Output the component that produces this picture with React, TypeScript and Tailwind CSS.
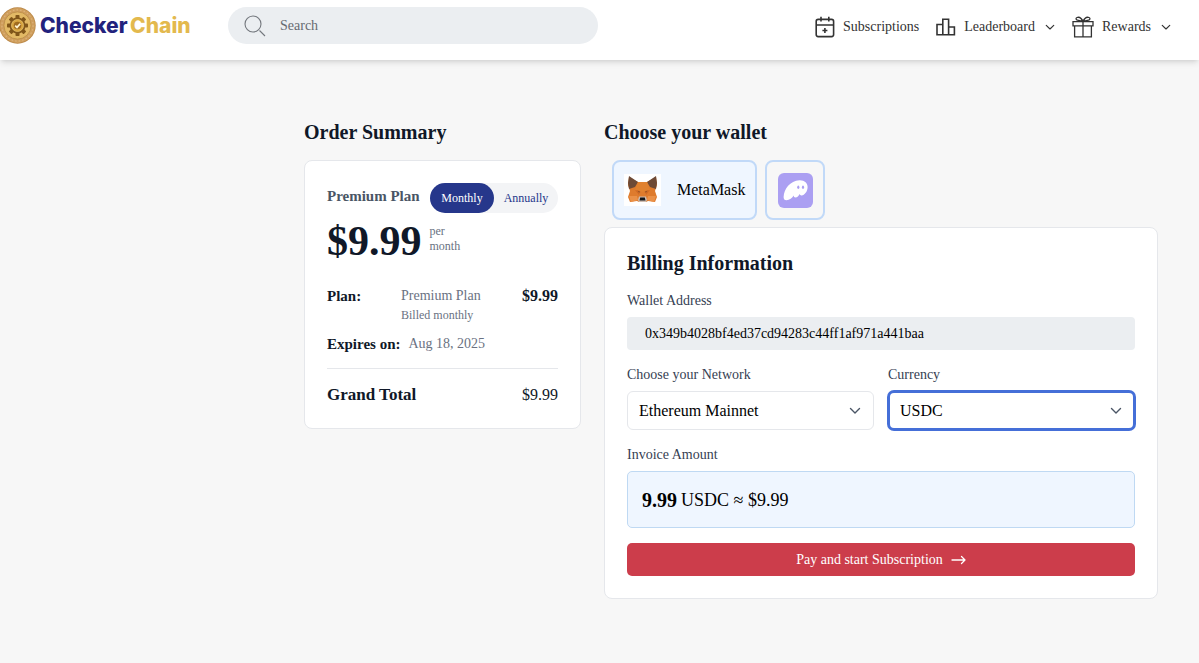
import { useState } from "react";
import type { ReactNode } from "react";

const NETWORKS = ["Ethereum Mainnet", "Polygon", "BNB Smart Chain"];
const CURRENCIES = ["USDC", "USDT", "ETH"];

const Coin = () => (
  <svg width="37" height="37" viewBox="0 0 37 37" className="-ml-px shrink-0" aria-hidden="true">
    <circle cx="18.5" cy="18.5" r="18.2" fill="#b98645" />
    <circle cx="18.5" cy="18.5" r="17.4" fill="#cf9e5c" />
    <circle cx="18.5" cy="18.5" r="15.6" fill="none" stroke="#dcb27a" strokeWidth="1.2" strokeDasharray="1.6 2" />
    <circle cx="18.5" cy="18.5" r="13.6" fill="#e2b965" stroke="#b98a48" strokeWidth="0.8" />
    <g fill="#80561a">
      <circle cx="18.5" cy="18.5" r="8" />
      {[0, 45, 90, 135, 180, 225, 270, 315].map((deg) => (
        <rect key={deg} x="16.5" y="8" width="4" height="4" rx="0.8" transform={`rotate(${deg} 18.5 18.5)`} />
      ))}
    </g>
    <circle cx="18.5" cy="18.5" r="6" fill="#d9a640" stroke="#e6c06c" strokeWidth="0.8" />
    <circle cx="18.5" cy="18.5" r="3.8" fill="#a06c20" />
    <path d="M16.2 18.6l1.8 1.8 3.2-3.6" fill="none" stroke="#fff3cf" strokeWidth="1.7" />
  </svg>
);

const CalendarIcon = () => (
  <svg width="20" height="22" viewBox="0 0 20 22" fill="none" stroke="#333" strokeWidth="1.6" aria-hidden="true">
    <rect x="1.2" y="3.4" width="17.4" height="17.2" rx="2" />
    <path d="M1.2 9h17.4M6 .8v4.6M13.8 .8v4.6M9.9 12v5M7.4 14.5h5" />
  </svg>
);

const PodiumIcon = () => (
  <svg width="20" height="18" viewBox="0 0 20 18" fill="none" stroke="#333" strokeWidth="1.6" aria-hidden="true">
    <path d="M1 16.7V6.5h5.8v10.2zM6.8 16.7V1.2h5.8v15.5zM12.6 16.7V9h5.8v7.7z" />
  </svg>
);

const GiftIcon = () => (
  <svg width="22" height="22" viewBox="0 0 22 22" fill="none" stroke="#333" strokeWidth="1.3" aria-hidden="true">
    <path d="M1 5.6h20v4.2H1zM2.6 9.8v11h16.8v-11M11 5.6v15.2" />
    <path d="M11 5.4C9.4 2 6.8.8 5 1.5 3.5 2.1 3.9 3.9 5.4 4.2L11 5.4c1.6-3.4 4.2-4.6 6-3.900 1.500.6 1.100 2.400-.4 2.700z" />
  </svg>
);

const Chevron = ({ className = "w-3" }: { className?: string }) => (
  <svg viewBox="0 0 12 8" fill="none" stroke="currentColor" strokeWidth="1.4" strokeLinecap="round" strokeLinejoin="round" className={className} aria-hidden="true">
    <path d="M1.500 1.600L6 6l4.500-4.400" />
  </svg>
);

const Fox = () => (
  <svg width="37" height="32" viewBox="0 0 37 32" aria-hidden="true">
    <path fill="#fff" d="M0 0h37v32H0z" />
    <path fill="#de7b2d" d="M5 3l9 5h9l9-5 1 8-2 6 2 6-2 5-7-1-2 1h-7l-2-1-7 1-2-5 2-6-2-6z" />
    <path fill="#6d4a36" d="M5 2l9 6-3 5-6 2-1-6zM32 2l-9 6 3 5 6 2 1-6z" />
    <path fill="#e0812f" d="M14 8h9l3 8-7.500 2L11 16z" />
    <path fill="#cf6a25" d="M11 16l5 1-1 4zM26 16l-5 1 1 4z" />
    <path fill="#ea9148" d="M5 22l8 0 1 4-7 2zM32 22l-8 0-1 4 7 2z" />
    <path fill="#8a4d25" d="M13.500 16.500l3 1.500-1.500.6zM23.500 16.500l-3 1.500 1.500.6z" />
    <path fill="#cdbcb0" d="M15 22.500h7l1 3.500-1 2h-7l-1-2z" />
    <path fill="#15171c" d="M16.200 23.500h4.600l.7 3h-6z" />
  </svg>
);

const Ghost = () => (
  <svg width="35" height="35" viewBox="0 0 35 35" aria-hidden="true">
    <rect width="35" height="35" rx="6" fill="#ab9ff2" />
    <path fill="#fff" d="M5.600 24C6 16 12 7.600 21.500 7.200c5-.2 8.200 3 8.100 7-.1 4.200-3 8-6 8.200-1.100.1-1.700-.5-1.900-1.300-1 1.800-2.500 3.500-4.200 3.500-1.300 0-1.800-.8-1.700-2-1.500 2.200-4.400 4.700-7.300 4.700-1.900 0-3-1.300-2.900-3.300z" />
    <ellipse cx="20.300" cy="14.200" rx="1.100" ry="1.700" fill="#ab9ff2" />
    <ellipse cx="25" cy="14.200" rx="1.100" ry="1.700" fill="#ab9ff2" />
  </svg>
);

type SelectFieldProps = { id: string; label: string; options: string[]; active?: boolean };

function SelectField({ id, label, options, active }: SelectFieldProps) {
  return (
    <div className="flex flex-col gap-1.5">
      <label htmlFor={id} className="text-sm text-gray-700">{label}</label>
      <div className="relative">
        <select
          id={id}
          className={`block h-[39px] w-full appearance-none rounded-md bg-white text-base text-black outline-none ${
            active ? "border-2 border-[#456fd8] px-[10px] ring-1 ring-[#456fd8]" : "border border-gray-200 px-[11px]"
          }`}
        >
          {options.map((option) => (
            <option key={option}>{option}</option>
          ))}
        </select>
        <Chevron className="pointer-events-none absolute right-[13px] top-4 w-3 text-gray-600" />
      </div>
    </div>
  );
}

function NavButton({ icon, label, menu }: { icon: ReactNode; label: string; menu?: boolean }) {
  return (
    <button type="button" className="flex items-center gap-2 text-sm text-[#333]">
      {icon}
      {label}
      {menu && <Chevron className="ml-0.5 w-[10px]" />}
    </button>
  );
}

export default function App() {
  const [period, setPeriod] = useState("Monthly");

  return (
    <div className="min-h-screen bg-[#f7f7f7] font-['Liberation_Serif',serif] text-gray-900">
      <header className="relative flex h-[60px] items-start bg-white shadow-md">
        <a href="#" className="flex w-[228px] shrink-0 items-center gap-1 pt-[7px] font-['Inter',sans-serif] text-[21px] font-extrabold leading-8">
          <Coin />
          <span className="whitespace-nowrap text-[#22227d]">
            Checker <span className="-ml-0.5 text-[#e3b94e]">Chain</span>
          </span>
        </a>
        <label className="mt-[7px] flex h-[37px] w-[370px] items-center gap-[14px] rounded-full bg-[#ebeef1] px-4">
          <svg width="22" height="22" viewBox="0 0 22 22" fill="none" stroke="#73777d" strokeWidth="1.100" className="shrink-0" aria-hidden="true">
            <circle cx="9" cy="9" r="8" />
            <path d="M15.500 15.500l5.500 5.500" />
          </svg>
          <input type="search" aria-label="Search" placeholder="Search" className="w-full bg-transparent text-sm outline-none placeholder:text-[#666a70]" />
        </label>
        <nav className="ml-auto flex h-[54px] items-center gap-[17px] pr-7">
          <NavButton icon={<CalendarIcon />} label="Subscriptions" />
          <NavButton icon={<PodiumIcon />} label="Leaderboard" menu />
          <NavButton icon={<GiftIcon />} label="Rewards" menu />
        </nav>
      </header>

      <main className="grid grid-cols-[1fr_2fr] items-start gap-[23px] pb-16 pl-[304px] pr-[41px] pt-[60px]">
        <section>
          <h2 className="text-xl font-bold leading-6">Order Summary</h2>
          <div className="mt-4 rounded-lg border border-gray-200 bg-white p-[22px]">
            <div className="flex items-start justify-between">
              <h3 className="whitespace-nowrap text-[15px] font-bold leading-[26px] text-gray-600">Premium Plan</h3>
              <div className="flex rounded-full bg-gray-100 text-xs">
                {["Monthly", "Annually"].map((name) => (
                  <button
                    key={name}
                    type="button"
                    onClick={() => setPeriod(name)}
                    className={`h-[30px] w-16 rounded-full ${period === name ? "bg-[#26378b] text-white" : "text-[#26378b]"}`}
                  >
                    {name}
                  </button>
                ))}
              </div>
            </div>
            <div className="mt-[7px] flex items-start gap-2">
              <span className="text-[42px] font-bold leading-[42px]">$9.99</span>
              <span className="mt-1 w-8 text-xs leading-[15px] text-gray-500">per month</span>
            </div>
            <div className="mt-6 grid grid-cols-[74px_1fr_auto] text-sm">
              <strong className="text-[15px] leading-5">Plan:</strong>
              <span className="text-gray-500">Premium Plan</span>
              <strong className="text-base leading-5">$9.99</strong>
              <span className="col-start-2 text-xs leading-[18px] text-gray-500">Billed monthly</span>
            </div>
            <div className="mt-[10px] flex gap-2 text-sm">
              <strong className="text-[15px] leading-5">Expires on:</strong>
              <span className="text-gray-500">Aug 18, 2025</span>
            </div>
            <hr className="my-[14px] border-gray-200" />
            <div className="flex items-center justify-between leading-[23px]">
              <strong className="text-[17px]">Grand Total</strong>
              <span className="text-base leading-[23px]">$9.99</span>
            </div>
          </div>
        </section>

        <section>
          <h2 className="text-xl font-bold leading-6">Choose your wallet</h2>
          <div className="mt-4 flex gap-2 pl-2">
            <button type="button" className="flex h-[60px] items-center gap-4 rounded-lg border-2 border-[#c1d9f8] bg-[#eff6ff] px-[10px] text-base text-black">
              <Fox />
              MetaMask
            </button>
            <button type="button" aria-label="Phantom" className="flex size-[60px] items-center justify-center rounded-lg border-2 border-[#c1d9f8]">
              <Ghost />
            </button>
          </div>

          <form className="mt-[7px] flex flex-col gap-[15px] rounded-lg border border-gray-200 bg-white p-[22px]" onSubmit={(e) => e.preventDefault()}>
            <h2 className="text-xl font-bold leading-[26px]">Billing Information</h2>
            <div className="flex flex-col gap-1.5">
              <label htmlFor="address" className="text-sm text-gray-700">Wallet Address</label>
              <input
                id="address"
                readOnly
                defaultValue="0x349b4028bf4ed37cd94283c44ff1af971a441baa"
                className="h-[33px] rounded bg-[#ebeef1] px-[18px] text-sm text-black outline-none"
              />
            </div>
            <div className="grid grid-cols-2 gap-[14px]">
              <SelectField id="network" label="Choose your Network" options={NETWORKS} />
              <SelectField id="currency" label="Currency" options={CURRENCIES} active />
            </div>
            <div className="flex flex-col gap-1.5">
              <h3 className="text-sm text-gray-700">Invoice Amount</h3>
              <p className="flex h-[57px] items-center gap-1 rounded-[5px] border border-[#bfd9f3] bg-[#eff6ff] px-[14px] text-lg text-black">
                <strong className="text-xl">9.99</strong> USDC ≈ $9.99
              </p>
            </div>
            <button type="submit" className="flex h-[33px] items-center justify-center gap-2 rounded-[5px] bg-[#cc3d4b] text-sm text-white">
              Pay and start Subscription
              <svg width="15" height="10" viewBox="0 0 15 10" fill="none" stroke="currentColor" strokeWidth="1.300" strokeLinecap="round" strokeLinejoin="round" aria-hidden="true">
                <path d="M1 5h13M10.500 1.500L14 5l-3.500 3.500" />
              </svg>
            </button>
          </form>
        </section>
      </main>
    </div>
  );
}
